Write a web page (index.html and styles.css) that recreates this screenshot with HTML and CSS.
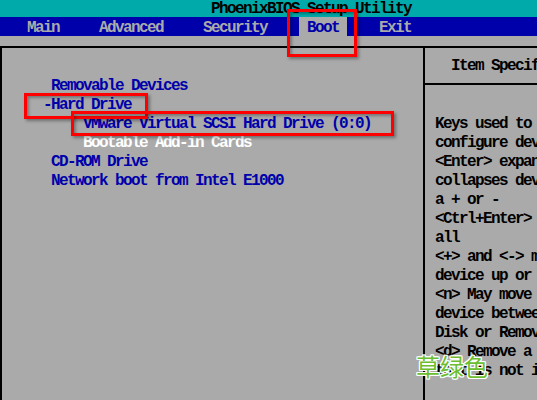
FILE: index.html
```html
<!DOCTYPE html>
<html lang="zh-CN">

<head>
    <meta charset="UTF-8">
    <meta name="viewport" content="width=device-width, initial-scale=1.0">
    <title>PhoenixBIOS Setup Utility - Boot</title>
    <link rel="stylesheet" href="styles.css">
</head>

<body>
    <div class="screen">
        <div class="title-bar">PhoenixBIOS Setup Utility</div>

        <div class="menu-bar">
            <span class="menu-item">Main     Advanced     Security    </span>
            <span class="menu-item active"> Boot </span>
            <span class="menu-item">    Exit</span>
        </div>

        <div class="frame">
            <div class="boot-list">
                <div class="row">Removable Devices</div>
                <div class="row level-0">-Hard Drive</div>
                <div class="row level-1">VMware Virtual SCSI Hard Drive (0:0)</div>
                <div class="row level-1 selected">Bootable Add-in Cards</div>
                <div class="row">CD-ROM Drive</div>
                <div class="row">Network boot from Intel E1000</div>
            </div>

            <div class="help">
                <div class="help-title">Item Specific Help</div>
                <div class="help-rule"></div>
                <div class="help-text">Keys used to view or
configure devices:
&lt;Enter&gt; expands or
collapses devices with
a + or -
&lt;Ctrl+Enter&gt; expands
all
&lt;+&gt; and &lt;-&gt; moves the
device up or down.
&lt;n&gt; May move removable
device between Hard
Disk or Removable Disk
&lt;d&gt; Remove a device
that is not installed.</div>
            </div>
        </div>

        <!-- red marker boxes drawn over the menu -->
        <div class="mark mark-boot"></div>
        <div class="mark mark-hdd"></div>
        <div class="mark mark-vmware"></div>

        <div class="watermark">草绿色</div>
    </div>
</body>

</html>
```

FILE: styles.css
```css
* {
    box-sizing: border-box;
    margin: 0;
    padding: 0;
}

body {
    width: 537px;
    height: 400px;
    overflow: hidden;
    background-color: #aaaaaa;
}

.screen {
    position: relative;
    width: 640px;
    height: 400px;
    display: flex;
    flex-direction: column;
    overflow: hidden;
    font-family: "Liberation Mono", "DejaVu Sans Mono", monospace;
    font-size: 16px;
    font-weight: bold;
    letter-spacing: -1.6px;
    line-height: 19px;
    background-color: #aaaaaa;
}

/* text rows keep their spaces, like cells of a text screen */
.title-bar,
.menu-item,
.row,
.help-title,
.help-text {
    white-space: pre;
}

.title-bar {
    height: 17px;
    padding: 2px 0 0 211px;
    line-height: 15px;
    background-color: #00aaaa;
    color: #000;
}

.menu-bar {
    display: flex;
    height: 19px;
    padding-left: 27px;
    background-color: #0000aa;
    color: #aaaaaa;
}

.menu-item {
    height: 19px;
    padding-top: 3px;
    line-height: 16px;
}

.menu-item.active {
    background-color: #aaaaaa;
    color: #0000aa;
}

/* box drawn with the line characters of the text screen */
.frame {
    flex: 1;
    display: flex;
    margin-top: 10px;
    border-top: 2px solid #000;
    border-left: 2px solid #000;
}

.boot-list {
    width: 421px;
    padding: 29px 0 0 25px;
    color: #0000aa;
}

.boot-list .row {
    height: 19px;
    padding-left: 24px;
}

.boot-list .level-0 {
    padding-left: 16px;
}

.boot-list .level-1 {
    padding-left: 56px;
}

.boot-list .selected {
    color: #fff;
}

.help {
    flex: 1;
    padding-top: 7px;
    border-left: 2px solid #000;
    color: #000;
}

.help-title {
    height: 19px;
    padding: 3px 0 0 26px;
    line-height: 16px;
}

.help-rule {
    height: 2px;
    margin: 9px 0 8px;
    background-color: #000;
}

.help-text {
    padding: 22px 0 0 10px;
}

.mark {
    position: absolute;
    border: 3px solid #ff0000;
    box-shadow: 2px 2px 3px rgba(0, 0, 0, 0.35), inset 2px 2px 3px rgba(0, 0, 0, 0.3);
}

.mark-boot {
    left: 287px;
    top: 9px;
    width: 70px;
    height: 48px;
}

.mark-hdd {
    left: 24px;
    top: 93px;
    width: 124px;
    height: 26px;
}

.mark-vmware {
    left: 71px;
    top: 111px;
    width: 323px;
    height: 25px;
}

.watermark {
    position: absolute;
    left: 416px;
    top: 352px;
    font-family: "Noto Sans CJK SC", sans-serif;
    font-size: 24px;
    font-weight: normal;
    letter-spacing: 0;
    line-height: 28px;
    color: #6cbd2f;
    text-shadow: 1px 0 #fff, -1px 0 #fff, 0 1px #fff, 0 -1px #fff,
        1px 1px #fff, -1px -1px #fff, 1px -1px #fff, -1px 1px #fff;
}
```
